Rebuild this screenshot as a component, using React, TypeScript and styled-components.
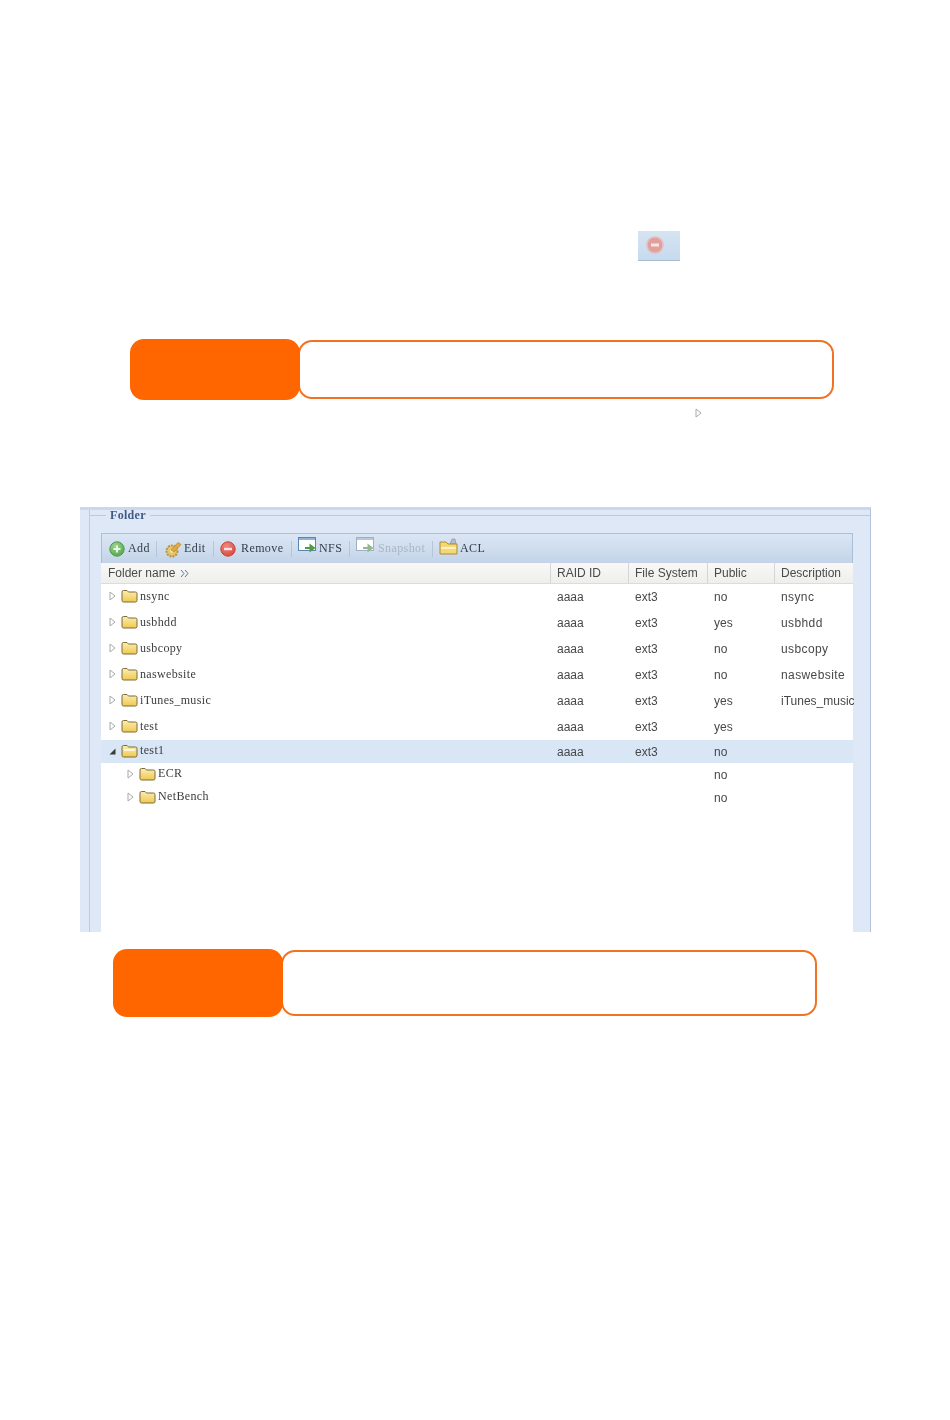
import React from "react";
import styled, { createGlobalStyle } from "styled-components";

const Global = createGlobalStyle`
  html, body { margin: 0; padding: 0; background: #fff; }
  body { font-family: "Liberation Sans", Arial, sans-serif; }
`;

const Page = styled.div`
  width: 950px;
  height: 1420px;
  overflow: hidden;
  padding-top: 231px;
  box-sizing: border-box;
`;

const RemoveChip = styled.div`
  width: 42px;
  height: 30px;
  margin-left: 638px;
  box-sizing: border-box;
  background: linear-gradient(#d6e4f2, #c6daee);
  border-bottom: 1px solid #a9bccf;
  padding: 4px 0 0 7px;
  filter: blur(0.5px);
`;

const Callout = styled.div<{ $left: number; $height: number; $top: number }>`
  display: flex;
  align-items: center;
  height: ${(p) => p.$height}px;
  margin-left: ${(p) => p.$left}px;
  margin-top: ${(p) => p.$top}px;
`;

const CalloutTab = styled.div`
  position: relative;
  z-index: 1;
  width: 170px;
  height: 100%;
  flex: none;
  background: #ff6600;
  border-radius: 14px;
`;

const CalloutBody = styled.div`
  width: 536px;
  height: calc(100% - 2px);
  margin-left: -2px;
  flex: none;
  box-sizing: border-box;
  background: #fff;
  border: 2px solid #f07322;
  border-radius: 14px;
`;

const Marker = styled.div`
  height: 10px;
  margin: 8px 0 0 695px;
  display: flex;
`;

const Panel = styled.div`
  width: 791px;
  height: 425px;
  margin: 89px 0 0 80px;
  box-sizing: border-box;
  background: #dfe8f6;
  border-top: 3px solid #c9d8ea;
  border-right: 1px solid #b5c4d8;
  padding: 0 17px 0 9px;
  overflow: hidden;
`;

const FieldSet = styled.div`
  height: 100%;
  box-sizing: border-box;
  border-left: 1px solid #bccbdf;
  padding-left: 11px;
  display: flex;
  flex-direction: column;
`;

const LegendRow = styled.div`
  display: flex;
  align-items: center;
  height: 10px;
  margin-left: -11px;
  gap: 4px;
  &::before, &::after {
    content: "";
    height: 1px;
    background: #bccbdf;
  }
  &::before { width: 16px; flex: none; }
  &::after { flex: 1; margin-right: -17px; }
`;

const Legend = styled.span`
  font: bold 12px "Liberation Serif", serif;
  color: #3f5b86;
  letter-spacing: 0.3px;
  filter: blur(0.5px);
`;

const Grid = styled.div`
  flex: 1;
  margin-top: 13px;
  background: #fff;
  display: flex;
  flex-direction: column;
`;

const Toolbar = styled.div`
  height: 30px;
  flex: none;
  box-sizing: border-box;
  display: flex;
  align-items: center;
  padding: 0 0 0 7px;
  background: linear-gradient(#dbe6f4, #c3d4e8);
  border-top: 1px solid #a9bfd8;
  border-left: 1px solid #a9bfd8;
  border-right: 1px solid #a9bfd8;
`;

const ToolButton = styled.div<{ $off?: boolean; $w: number; $gap: number }>`
  display: flex;
  align-items: center;
  gap: ${(p) => p.$gap}px;
  width: ${(p) => p.$w}px;
  flex: none;
  font: 12px "Liberation Serif", serif;
  letter-spacing: 0.4px;
  color: ${(p) => (p.$off ? "#a9b6c4" : "#333d4a")};
  filter: blur(0.5px);
`;

const ToolSep = styled.div`
  width: 1px;
  height: 16px;
  background: #b4c5d9;
  flex: none;
  margin: 0 6px 0 0;
`;

const cols = "449px 78px 79px 67px 79px";

const HeaderRow = styled.div`
  display: grid;
  grid-template-columns: ${cols};
  height: 21px;
  flex: none;
  box-sizing: border-box;
  background: linear-gradient(#f8f8f6, #eeeeec);
  border-bottom: 1px solid #dcdcdc;
`;

const HeaderCell = styled.div`
  display: flex;
  align-items: center;
  gap: 5px;
  padding-left: 6px;
  font-size: 12px;
  color: #4a4a4a;
  white-space: nowrap;
  overflow: hidden;
  border-left: 1px solid #d6d6d6;
  &:first-child { border-left: 0; padding-left: 7px; }
  filter: blur(0.5px);
`;

const BodyRow = styled.div<{ $h: number; $sel?: boolean }>`
  display: grid;
  grid-template-columns: ${cols};
  height: ${(p) => p.$h}px;
  flex: none;
  background: ${(p) => (p.$sel ? "#d9e6f6" : "transparent")};
`;

const NameCell = styled.div<{ $indent: number }>`
  display: flex;
  align-items: center;
  padding-left: ${(p) => p.$indent}px;
  padding-bottom: 2px;
  box-sizing: border-box;
  gap: 5px;
  font: 12px "Liberation Serif", serif;
  letter-spacing: 0.35px;
  color: #3c3c3c;
  filter: blur(0.5px);
`;

const NameText = styled.span`
  margin-left: -3px;
`;

const Cell = styled.div<{ $wide?: boolean }>`
  display: flex;
  align-items: center;
  padding-left: 7px;
  font-size: 12px;
  color: #484848;
  white-space: nowrap;
  letter-spacing: ${(p) => (p.$wide ? "0.4px" : "0")};
  filter: blur(0.5px);
`;

const Arrow = ({ open }: { open?: boolean }) =>
  open ? (
    <svg width="7" height="8" viewBox="0 0 7 8" style={{ flex: "none" }}>
      <path d="M0.5 7.5 L6.5 7.5 L6.5 1.5 Z" fill="#3a3a3a" />
    </svg>
  ) : (
    <svg width="7" height="10" viewBox="0 0 7 10" style={{ flex: "none" }}>
      <path d="M1 1 L6 5 L1 9 Z" fill="#fff" stroke="#a8a8a8" strokeWidth="1" />
    </svg>
  );

const Folder = ({ open }: { open?: boolean }) => (
  <svg width="17" height="14" viewBox="0 0 17 14" style={{ flex: "none" }}>
    <defs>
      <linearGradient id="fold" x1="0" y1="0" x2="0" y2="1">
        <stop offset="0" stopColor="#fbeeb4" />
        <stop offset="1" stopColor="#efc84e" />
      </linearGradient>
    </defs>
    <path
      d="M1 3 Q1 1.5 2.5 1.5 L6 1.5 L7.5 3 L14.5 3 Q16 3 16 4.5 L16 11.5 Q16 13 14.5 13 L2.5 13 Q1 13 1 11.5 Z"
      fill="url(#fold)"
      stroke="#7d6a3a"
      strokeWidth="1"
    />
    {open && <rect x="3" y="5" width="11" height="2" fill="#fff6d4" />}
  </svg>
);

const AddIcon = () => (
  <svg width="16" height="16" viewBox="0 0 16 16" style={{ flex: "none" }}>
    <defs>
      <radialGradient id="grn" cx="0.4" cy="0.3" r="0.8">
        <stop offset="0" stopColor="#9ed68c" />
        <stop offset="1" stopColor="#4da24a" />
      </radialGradient>
    </defs>
    <circle cx="8" cy="8" r="7.2" fill="url(#grn)" stroke="#4b9a49" />
    <path d="M8 4.5V11.5M4.5 8H11.5" stroke="#e8f6e4" strokeWidth="2" />
  </svg>
);

const EditIcon = () => (
  <svg width="20" height="18" viewBox="0 0 20 18" style={{ flex: "none" }}>
    <circle cx="9" cy="11" r="5.5" fill="#e8c568" stroke="#b2954c" strokeDasharray="2 1" strokeWidth="2" />
    <circle cx="9" cy="11" r="1.8" fill="#f7ecc4" />
    <path d="M8 10 L15 2.5 L18 4.5 L11 12 Z" fill="#e6a93a" stroke="#a37b2c" strokeWidth="0.6" />
  </svg>
);

const RemoveIcon = () => (
  <svg width="16" height="16" viewBox="0 0 16 16" style={{ display: "block", flex: "none" }}>
    <defs>
      <radialGradient id="red" cx="0.4" cy="0.3" r="0.8">
        <stop offset="0" stopColor="#f08a7c" />
        <stop offset="1" stopColor="#d9433a" />
      </radialGradient>
    </defs>
    <circle cx="8" cy="8" r="7.2" fill="url(#red)" stroke="#c9433d" />
    <path d="M4 8H12" stroke="#fbe6e2" strokeWidth="2.4" />
  </svg>
);

const PaleRemove = () => (
  <svg width="20" height="20" viewBox="0 0 20 20" style={{ display: "block" }}>
    <circle cx="10" cy="10" r="8" fill="#e0a09c" stroke="#e6bcbc" strokeWidth="1.5" />
    <path d="M6 10H14" stroke="#f9e4df" strokeWidth="3" />
  </svg>
);

const WindowIcon = ({ off }: { off?: boolean }) => (
  <svg width="20" height="18" viewBox="0 0 20 18" style={{ flex: "none", marginTop: -5 }}>
    <rect x="0.5" y="0.5" width="17" height="13" fill="#fff" stroke={off ? "#9db0c8" : "#5a84b4"} />
    <rect x="1" y="1" width="16" height="2" fill={off ? "#b7c8dc" : "#8fb3d8"} />
    <path d="M7 10 H11.5 V6.5 L17.5 11 L11.5 15.5 V12 H7 Z" fill={off ? "#93b78e" : "#4f9a42"} />
  </svg>
);

const AclIcon = () => (
  <svg width="20" height="18" viewBox="0 0 20 18" style={{ flex: "none", marginTop: -4 }}>
    <path d="M11 6 L13 1 L16 1 L17 6 Z" fill="#b9bcc2" stroke="#8a8d94" strokeWidth="0.6" />
    <path d="M1 4 H7 L9 6 H18 V16 H1 Z" fill="#f5d873" stroke="#a98c3e" />
    <rect x="2" y="9" width="15" height="2" fill="#fff3c4" />
  </svg>
);

const ChevronDouble = () => (
  <svg width="9" height="9" viewBox="0 0 9 9">
    <path d="M1 1 L4 4.5 L1 8 M5 1 L8 4.5 L5 8" fill="none" stroke="#5577aa" strokeWidth="1" />
  </svg>
);

type Item = {
  name: string;
  raid?: string;
  fs?: string;
  pub: string;
  desc?: string;
  h: number;
  indent: number;
  sel?: boolean;
};

const items: Item[] = [
  { name: "nsync", raid: "aaaa", fs: "ext3", pub: "no", desc: "nsync", h: 26, indent: 8 },
  { name: "usbhdd", raid: "aaaa", fs: "ext3", pub: "yes", desc: "usbhdd", h: 26, indent: 8 },
  { name: "usbcopy", raid: "aaaa", fs: "ext3", pub: "no", desc: "usbcopy", h: 26, indent: 8 },
  { name: "naswebsite", raid: "aaaa", fs: "ext3", pub: "no", desc: "naswebsite", h: 26, indent: 8 },
  { name: "iTunes_music", raid: "aaaa", fs: "ext3", pub: "yes", desc: "iTunes_music", h: 26, indent: 8 },
  { name: "test", raid: "aaaa", fs: "ext3", pub: "yes", h: 26, indent: 8 },
  { name: "test1", raid: "aaaa", fs: "ext3", pub: "no", h: 23, indent: 8, sel: true },
  { name: "ECR", pub: "no", h: 23, indent: 26 },
  { name: "NetBench", pub: "no", h: 23, indent: 26 },
];

export default function App() {
  return (
    <Page>
      <Global />
      <RemoveChip>
        <PaleRemove />
      </RemoveChip>
      <Callout $left={130} $height={61} $top={78}>
        <CalloutTab />
        <CalloutBody />
      </Callout>
      <Marker>
        <Arrow />
      </Marker>
      <Panel>
        <FieldSet>
          <LegendRow>
            <Legend>Folder</Legend>
          </LegendRow>
          <Grid>
            <Toolbar>
              <ToolButton $w={47} $gap={3}><AddIcon /><span>Add</span></ToolButton>
              <ToolSep />
              <ToolButton $w={50} $gap={1}><EditIcon /><span>Edit</span></ToolButton>
              <ToolSep />
              <ToolButton $w={71} $gap={5}><RemoveIcon /><span>Remove</span></ToolButton>
              <ToolSep />
              <ToolButton $w={51} $gap={1}><WindowIcon /><span>NFS</span></ToolButton>
              <ToolSep />
              <ToolButton $w={76} $gap={2} $off><WindowIcon off /><span>Snapshot</span></ToolButton>
              <ToolSep />
              <ToolButton $w={50} $gap={1}><AclIcon /><span>ACL</span></ToolButton>
            </Toolbar>
            <HeaderRow>
              <HeaderCell>Folder name <ChevronDouble /></HeaderCell>
              <HeaderCell>RAID ID</HeaderCell>
              <HeaderCell>File System</HeaderCell>
              <HeaderCell>Public</HeaderCell>
              <HeaderCell>Description</HeaderCell>
            </HeaderRow>
            {items.map((it) => (
              <BodyRow key={it.name} $h={it.h} $sel={it.sel}>
                <NameCell $indent={it.indent}>
                  <Arrow open={it.sel} />
                  <Folder open={it.sel} />
                  <NameText>{it.name}</NameText>
                </NameCell>
                <Cell>{it.raid}</Cell>
                <Cell>{it.fs}</Cell>
                <Cell>{it.pub}</Cell>
                <Cell $wide={it.name !== "iTunes_music"}>{it.desc}</Cell>
              </BodyRow>
            ))}
          </Grid>
        </FieldSet>
      </Panel>
      <Callout $left={113} $height={68} $top={17}>
        <CalloutTab />
        <CalloutBody />
      </Callout>
    </Page>
  );
}
